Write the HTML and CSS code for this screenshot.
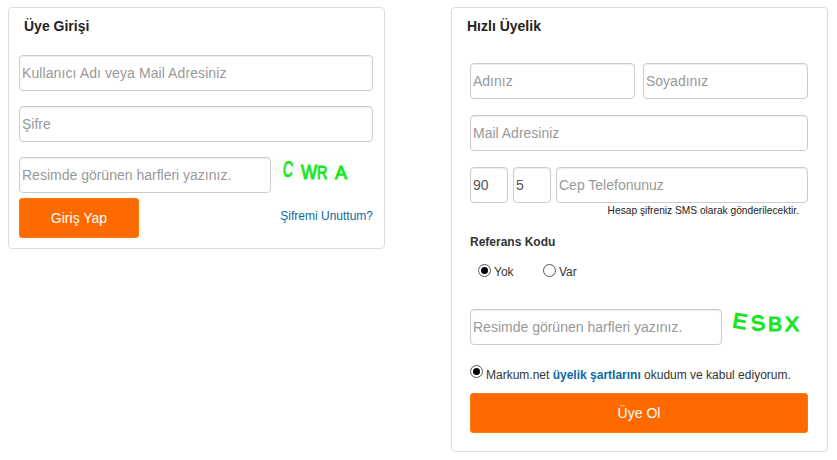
FILE: index.html
```html
<!DOCTYPE html>
<html lang="tr">
<head>
<meta charset="utf-8">
<title>Üye Girişi</title>
<link rel="stylesheet" href="styles.css">
</head>
<body>
<main class="page">
  <section class="panel panel-login">
    <h2 class="title">Üye Girişi</h2>
    <input class="field field-wide field-user" placeholder="Kullanıcı Adı veya Mail Adresiniz">
    <input class="field field-wide gap15" placeholder="Şifre">
    <div class="captcha-row gap15">
      <input class="field field-captcha" placeholder="Resimde görünen harfleri yazınız.">
      <div class="captcha captcha-a" aria-label="captcha">
        <span class="c1">C</span><span class="c2">W</span><span class="c3">R</span><span class="c4">A</span>
      </div>
    </div>
    <div class="login-actions">
      <button class="btn btn-login" type="button">Giriş Yap</button>
      <a class="forgot" href="#">Şifremi Unuttum?</a>
    </div>
  </section>

  <section class="panel panel-signup">
    <h2 class="title">Hızlı Üyelik</h2>
    <div class="signup-body">
      <div class="row name-row">
        <input class="field field-half" placeholder="Adınız">
        <input class="field field-half" placeholder="Soyadınız">
      </div>
      <input class="field field-full gap16" placeholder="Mail Adresiniz">
      <div class="row phone-row gap16">
        <input class="field field-code" value="90">
        <input class="field field-code2" value="5">
        <input class="field field-phone" placeholder="Cep Telefonunuz">
      </div>
      <p class="hint">Hesap şifreniz SMS olarak gönderilecektir.</p>
      <h3 class="ref-title">Referans Kodu</h3>
      <div class="ref-options">
        <label class="opt opt-yes"><span class="radio on"></span>Yok</label>
        <label class="opt"><span class="radio"></span>Var</label>
      </div>
      <div class="captcha-row captcha-row-signup">
        <input class="field field-captcha" placeholder="Resimde görünen harfleri yazınız.">
        <div class="captcha captcha-b" aria-label="captcha">
          <span class="e1">E</span><span class="e2">S</span><span class="e3">B</span><span class="e4">X</span>
        </div>
      </div>
      <p class="terms"><span class="radio on terms-radio"></span><span class="terms-text">Markum.net <a href="#">üyelik şartlarını</a> okudum ve kabul ediyorum.</span></p>
      <button class="btn btn-signup" type="button">Üye Ol</button>
    </div>
  </section>
</main>
</body>
</html>
```

FILE: styles.css
```css
* { box-sizing: border-box; }

html, body { margin: 0; padding: 0; background: #fff; }

body {
  font-family: "Liberation Sans", Arial, sans-serif;
  color: #333;
  width: 837px;
  height: 460px;
  overflow: hidden;
}

.page {
  display: flex;
  align-items: flex-start;
  gap: 66px;
  padding: 7px 8px 0;
}

.panel {
  width: 377px;
  background: #fff;
  border: 1px solid #ddd;
  border-radius: 4px;
}

.panel-login { height: 242px; padding: 0 11px 0 10px; }
.panel-signup { height: 445px; padding: 0 19px 0 18px; }

.title {
  margin: 0;
  font-size: 14px;
  line-height: 16px;
  font-weight: bold;
  color: #222;
}

.panel-login .title { padding: 10px 0 21px 5px; }
.panel-signup .title { padding-top: 10px; height: 55px; margin-left: -3px; }

.field {
  display: block;
  height: 36px;
  padding: 0 2px;
  border: 1px solid #ccc;
  border-radius: 4px;
  background: #fff;
  font-family: inherit;
  font-size: 14px;
  color: #555;
  box-shadow: inset 0 1px 1px rgba(0, 0, 0, .075);
  outline: none;
}

.field::placeholder { color: #999; opacity: 1; }
.field-user::placeholder { letter-spacing: .09px; }

.field-wide { width: 354px; }
.field-captcha { width: 252px; flex: none; }
.gap15 { margin-top: 15px; }
.gap16 { margin-top: 16px; }

.captcha-row { display: flex; align-items: flex-start; }

.captcha {
  flex: none;
  width: 75px;
  height: 26px;
  margin-left: 5px;
  background: #fdfffd;
  color: #17e61f;
  font-weight: normal;
  line-height: 26px;
  white-space: nowrap;
  -webkit-text-stroke: 1px #17e61f;
}

.captcha span { display: inline-block; transform-origin: 0 50%; }

.captcha-a { padding-left: 7px; font-size: 18px; }
.c1 { width: 16px; font-size: 22px; transform: translateY(-1px) rotate(6deg) scaleX(.62); }
.c2 { width: 16px; margin-left: 2px; font-size: 20px; transform: translateY(2px) scaleX(.85); }
.c3 { width: 11px; font-size: 18px; transform: translateY(2px) scaleX(.8); }
.c4 { margin-left: 7px; font-size: 18px; transform: translateY(2px); }

.captcha-row-signup .captcha { margin-top: 1px; }
.captcha-b { padding-left: 6px; font-size: 21px; -webkit-text-stroke-width: 1.2px; }
.e1 { transform: translateY(-3px) rotate(10deg); }
.e2 { margin-left: 4px; transform: translateY(1px) rotate(-6deg); }
.e3 { margin-left: 3px; transform: translateY(1px); }
.e4 { margin-left: 3px; transform: translateY(1px); }

.login-actions {
  display: flex;
  align-items: flex-start;
  justify-content: space-between;
  margin-top: 5px;
  width: 354px;
}

.btn {
  display: block;
  height: 40px;
  border: 1px solid #ff7a0a;
  border-radius: 3px;
  background: #ff6a00;
  color: #fff;
  font-family: inherit;
  font-size: 14px;
  padding: 0;
}

.btn-login { width: 120px; }
.btn-signup { width: 338px; margin-top: 11px; }

.forgot {
  margin-top: 11px;
  font-size: 12px;
  line-height: 15px;
  color: #0b6aa2;
  text-decoration: none;
}

.row { display: flex; }
.name-row { gap: 8px; }
.phone-row { gap: 5px; }

.field-half { width: 165px; }
.field-full { width: 338px; }
.field-code { width: 38px; }
.field-code2 { width: 38px; }
.field-phone { width: 252px; }

.hint {
  margin: 2px 0 0;
  padding-right: 9px;
  text-align: right;
  font-size: 10.2px;
  line-height: 12px;
  color: #222;
}

.ref-title {
  margin: 18px 0 0;
  font-size: 12px;
  line-height: 15px;
  font-weight: bold;
  color: #333;
}

.ref-options {
  display: flex;
  margin-top: 15px;
  padding-left: 8px;
  font-size: 12px;
  line-height: 14px;
  color: #333;
}

.opt { display: flex; align-items: flex-start; }
.opt-yes { width: 65px; }

.radio {
  flex: none;
  position: relative;
  width: 13px;
  height: 13px;
  margin-right: 3px;
  border: 1px solid #555;
  border-radius: 50%;
  background: #fff;
  top: -1px;
}

.radio.on::after {
  content: "";
  position: absolute;
  left: 2px;
  top: 2px;
  width: 7px;
  height: 7px;
  border-radius: 50%;
  background: #000;
}

.captcha-row-signup { margin-top: 30px; }

.terms {
  display: flex;
  margin: 20px 0 0;
  font-size: 12px;
  line-height: 14px;
  color: #333;
}

.terms-radio { top: 0; }
.terms-text { padding-top: 3px; }

.terms a {
  color: #0b6aa2;
  font-weight: bold;
  text-decoration: none;
}
```
